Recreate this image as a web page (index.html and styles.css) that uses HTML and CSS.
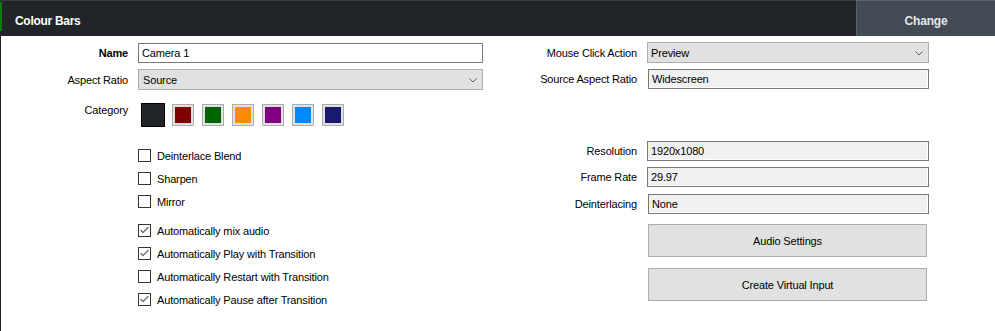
FILE: index.html
```html
<!DOCTYPE html>
<html lang="en">
	<head>
		<meta http-equiv="Content-Type" content="text/html; charset=utf-8" />
		<title>Colour Bars</title>
		<link rel="stylesheet" href="styles.css">
	</head>
	<body>
		<div class="panel">
			<div class="header">
				<div class="title">Colour Bars</div>
				<div class="change">Change</div>
			</div>
			<div class="content">
				<div class="left">
					<div class="row row-name">
						<span class="lbl bold">Name</span>
						<div class="textbox">Camera 1</div>
					</div>
					<div class="row row-aspect">
						<span class="lbl">Aspect Ratio</span>
						<div class="combo">
							<span>Source</span>
							<svg class="chev" width="8" height="5" viewBox="0 0 8 5"><polyline points="0.5,0.5 4,4 7.5,0.5" fill="none" stroke="#606060" stroke-width="1"/></svg>
						</div>
					</div>
					<div class="row row-cat">
						<span class="lbl lbl-top">Category</span>
						<div class="swatches">
							<div class="sw sw-sel"></div>
							<div class="sw"><i style="background:#800000"></i></div>
							<div class="sw"><i style="background:#006400"></i></div>
							<div class="sw"><i style="background:#ff8c00"></i></div>
							<div class="sw"><i style="background:#800080"></i></div>
							<div class="sw"><i style="background:#0088ff"></i></div>
							<div class="sw"><i style="background:#191970"></i></div>
						</div>
					</div>
					<div class="checks">
						<div class="chk"><span class="box"></span>Deinterlace Blend</div>
						<div class="chk"><span class="box"></span>Sharpen</div>
						<div class="chk"><span class="box"></span>Mirror</div>
						<div class="chk chk-gap"><span class="box"><svg width="11" height="11" viewBox="0 0 11 11"><polyline points="1.5,5 4,7.5 9.5,2" fill="none" stroke="#6e6e6e" stroke-width="1.3"/></svg></span>Automatically mix audio</div>
						<div class="chk"><span class="box"><svg width="11" height="11" viewBox="0 0 11 11"><polyline points="1.5,5 4,7.5 9.5,2" fill="none" stroke="#6e6e6e" stroke-width="1.3"/></svg></span>Automatically Play with Transition</div>
						<div class="chk"><span class="box"></span>Automatically Restart with Transition</div>
						<div class="chk"><span class="box"><svg width="11" height="11" viewBox="0 0 11 11"><polyline points="1.5,5 4,7.5 9.5,2" fill="none" stroke="#6e6e6e" stroke-width="1.3"/></svg></span>Automatically Pause after Transition</div>
					</div>
				</div>
				<div class="right">
					<div class="frow r-mouse">
						<span class="lbl">Mouse Click Action</span>
						<div class="combo combo-r">
							<span>Preview</span>
							<svg class="chev" width="8" height="5" viewBox="0 0 8 5"><polyline points="0.5,0.5 4,4 7.5,0.5" fill="none" stroke="#606060" stroke-width="1"/></svg>
						</div>
					</div>
					<div class="frow r-src">
						<span class="lbl">Source Aspect Ratio</span>
						<div class="readonly shift">Widescreen</div>
					</div>
					<div class="frow r-res">
						<span class="lbl">Resolution</span>
						<div class="readonly">1920x1080</div>
					</div>
					<div class="frow r-fps">
						<span class="lbl">Frame Rate</span>
						<div class="readonly">29.97</div>
					</div>
					<div class="frow r-deint">
						<span class="lbl">Deinterlacing</span>
						<div class="readonly shift">None</div>
					</div>
					<div class="frow r-audio">
						<span></span>
						<div class="btn">Audio Settings</div>
					</div>
					<div class="frow r-virtual">
						<span></span>
						<div class="btn">Create Virtual Input</div>
					</div>
				</div>
			</div>
		</div>
	</body>
</html>
```

FILE: styles.css
```css
*{
	padding: 0;
	margin: 0;
	box-sizing: border-box;
}
body{
	width: 995px;
	height: 331px;
	overflow: hidden;
	background: #fff;
	font-family: "Liberation Sans", Arial, sans-serif;
	font-size: 11px;
	letter-spacing: -0.15px;
	color: #000;
}
.panel{
	height: 331px;
	display: flex;
	flex-direction: column;
}
.header{
	height: 36px;
	display: flex;
	background: linear-gradient(#0f7b0f, #0f7b0f) 0 1px / 2px 29px no-repeat, #212529;
	border-top: 1px solid #353a40;
}
.title{
	flex: 1;
	padding: 4px 0 0 15px;
	display: flex;
	align-items: center;
	font-size: 12px;
	letter-spacing: -0.3px;
	font-weight: bold;
	color: #fff;
}
.change{
	width: 139px;
	background: #434a53;
	border-left: 1px solid #5a626b;
	border-top: 1px solid #5a626b;
	margin-top: -1px;
	padding-top: 4px;
	display: flex;
	align-items: center;
	justify-content: center;
	font-size: 12px;
	letter-spacing: -0.2px;
	font-weight: bold;
	color: #e4e7ea;
}
.content{
	flex: 1;
	display: flex;
	border-left: 1px solid #1e2226;
}
/* left column */
.left{
	width: 482px;
	padding-top: 7px;
}
.row{
	display: grid;
	grid-template-columns: 127px 345px;
	column-gap: 10px;
	align-items: center;
}
.lbl{
	text-align: right;
	white-space: nowrap;
}
.bold{
	font-weight: bold;
}
.row-aspect{
	margin-top: 6px;
}
.row-cat{
	margin-top: 13px;
	align-items: start;
}
.lbl-top{
	line-height: 14px;
}
.textbox{
	height: 20px;
	border: 1px solid #7a7a7a;
	background: #fff;
	padding-left: 3px;
	line-height: 18px;
}
.combo{
	height: 21px;
	border: 1px solid #adadad;
	background: #e1e1e1;
	padding: 0 5px 0 4px;
	display: flex;
	align-items: center;
	justify-content: space-between;
}
.chev{
	display: block;
	margin-top: 1px;
}
.swatches{
	display: flex;
	align-items: center;
	gap: 8px;
	padding-left: 3px;
}
.sw{
	width: 22px;
	height: 22px;
	border: 1px solid #adadad;
	background: #e1e1e1;
	padding: 2px;
}
.sw i{
	display: block;
	width: 16px;
	height: 16px;
}
.sw-sel{
	width: 24px;
	height: 24px;
	border: 1px solid #000;
	background: #212529;
	margin-right: -1px;
}
.checks{
	margin-top: 17px;
	padding-left: 137px;
}
.chk{
	height: 23px;
	display: flex;
	align-items: center;
	gap: 6px;
	white-space: nowrap;
}
.chk-gap{
	margin-top: 6px;
}
.box{
	width: 13px;
	height: 13px;
	border: 1px solid #333;
	background: #fff;
	display: flex;
	align-items: center;
	justify-content: center;
}
.box svg{
	display: block;
}
/* right column */
.right{
	flex: 1;
	padding-top: 6px;
}
.frow{
	display: grid;
	grid-template-columns: 154px 282px;
	column-gap: 10px;
	align-items: center;
}
.readonly{
	height: 20px;
	border: 1px solid #7a7a7a;
	background: #f0f0f0;
	box-shadow: inset -1px -1px 0 #fff;
	padding-left: 3px;
	line-height: 18px;
}
.shift{
	margin-left: 1px;
}
.combo-r{
	padding-left: 3px;
}
.r-src{
	margin-top: 6px;
}
.r-res{
	margin-top: 52px;
}
.r-fps{
	margin-top: 6px;
}
.r-deint{
	margin-top: 7px;
}
.r-audio{
	margin-top: 10px;
}
.r-virtual{
	margin-top: 11px;
}
.btn{
	width: 279px;
	height: 33px;
	margin-left: 1px;
	border: 1px solid #adadad;
	background: #e1e1e1;
	display: flex;
	align-items: center;
	justify-content: center;
}
```
